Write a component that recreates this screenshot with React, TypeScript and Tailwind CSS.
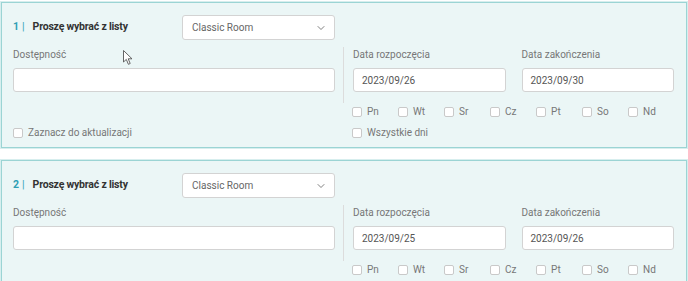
import { ChevronDown } from 'lucide-react';

const days = ['Pn', 'Wt', 'Sr', 'Cz', 'Pt', 'So', 'Nd'];

type Rezerwacja = {
  nr: number;
  od: string;
  do: string;
};

const rezerwacje: Rezerwacja[] = [
  { nr: 1, od: '2023/09/26', do: '2023/09/30' },
  { nr: 2, od: '2023/09/25', do: '2023/09/26' },
];

function Checkbox({ label }: { label: string }) {
  return (
    <label className="flex items-center gap-[5px] h-[14px] text-[10px] text-[#777] leading-none">
      <span className="w-[10px] h-[10px] rounded-[2px] border border-[#c9c9c9] bg-white shrink-0" />
      {label}
    </label>
  );
}

function Pole({ value }: { value?: string }) {
  return (
    <div className="h-[24px] w-full rounded-[3px] border border-[#d3d3d3] bg-white flex items-center px-[8px] text-[10px] text-[#555]">
      {value}
    </div>
  );
}

function Kursor() {
  return (
    <svg className="absolute left-[121px] top-[47px]" width="11" height="16" viewBox="0 0 11 16">
      <path
        d="M0.5 0.5 L0.5 12 L3.3 9.4 L5.4 14.3 L7.2 13.5 L5.2 8.8 L9 8.8 Z"
        fill="#fff"
        stroke="#555"
        strokeWidth="0.9"
        strokeLinejoin="round"
      />
    </svg>
  );
}

function Karta({ r }: { r: Rezerwacja }) {
  return (
    <div className="relative w-[686px] h-[146px] shrink-0 border border-[#9bd4d4] bg-[#ebf6f6] flex pl-[11px] pt-[12px] pr-[12px] shadow-[0_0_0_1px_#d7eeee]">
      {/* lewa kolumna */}
      <div className="w-[322px] flex flex-col">
        <div className="h-[25px] flex items-center justify-between">
          <div className="flex items-center text-[10.5px] leading-none">
            <span className="text-[#2f9fb4] font-bold">{r.nr}</span>
            <span className="text-[#2f9fb4] ml-[3px]">|</span>
            <span className="text-[#333] font-bold ml-[8px] tracking-[-0.2px]">Proszę wybrać z listy</span>
          </div>
          <div className="w-[153px] h-[25px] rounded-[3px] border border-[#d3d3d3] bg-white flex items-center justify-between pl-[9px] pr-[7px] text-[10px] text-[#666]">
            Classic Room
            <ChevronDown className="w-[12px] h-[12px] text-[#555]" strokeWidth={1.5} />
          </div>
        </div>
        <p className="mt-[8px] h-[14px] leading-[14px] text-[10px] text-[#777]">Dostępność</p>
        <div className="mt-[6px]">
          <Pole />
        </div>
        <div className="mt-[34px]">
          <Checkbox label="Zaznacz do aktualizacji" />
        </div>
      </div>

      {/* prawa kolumna */}
      <div className="flex-1 ml-[8px] pt-[32px] flex flex-col">
        <div className="border-l border-[#dcdcdc] pl-[9px] pt-[1px] pb-[11px] grid grid-cols-2 gap-x-[16px]">
          <div>
            <p className="h-[14px] leading-[14px] text-[10px] text-[#777]">Data rozpoczęcia</p>
            <div className="mt-[6px]">
              <Pole value={r.od} />
            </div>
          </div>
          <div>
            <p className="h-[14px] leading-[14px] text-[10px] text-[#777]">Data zakończenia</p>
            <div className="mt-[6px]">
              <Pole value={r.do} />
            </div>
          </div>
        </div>
        <div className="mt-[2px] pl-[9px] flex">
          {days.map((d) => (
            <div key={d} className="w-[46px]">
              <Checkbox label={d} />
            </div>
          ))}
        </div>
        <div className="mt-[7px] pl-[9px]">
          <Checkbox label="Wszystkie dni" />
        </div>
      </div>

      {r.nr === 1 && <Kursor />}
    </div>
  );
}

export default function App() {
  return (
    <div
      className="w-[688px] h-[281px] overflow-hidden bg-white pt-[2px] pl-[1px] flex flex-col gap-[12px]"
      style={{ fontFamily: 'Roboto, "Liberation Sans", sans-serif' }}
    >
      {rezerwacje.map((r) => (
        <Karta key={r.nr} r={r} />
      ))}
    </div>
  );
}
